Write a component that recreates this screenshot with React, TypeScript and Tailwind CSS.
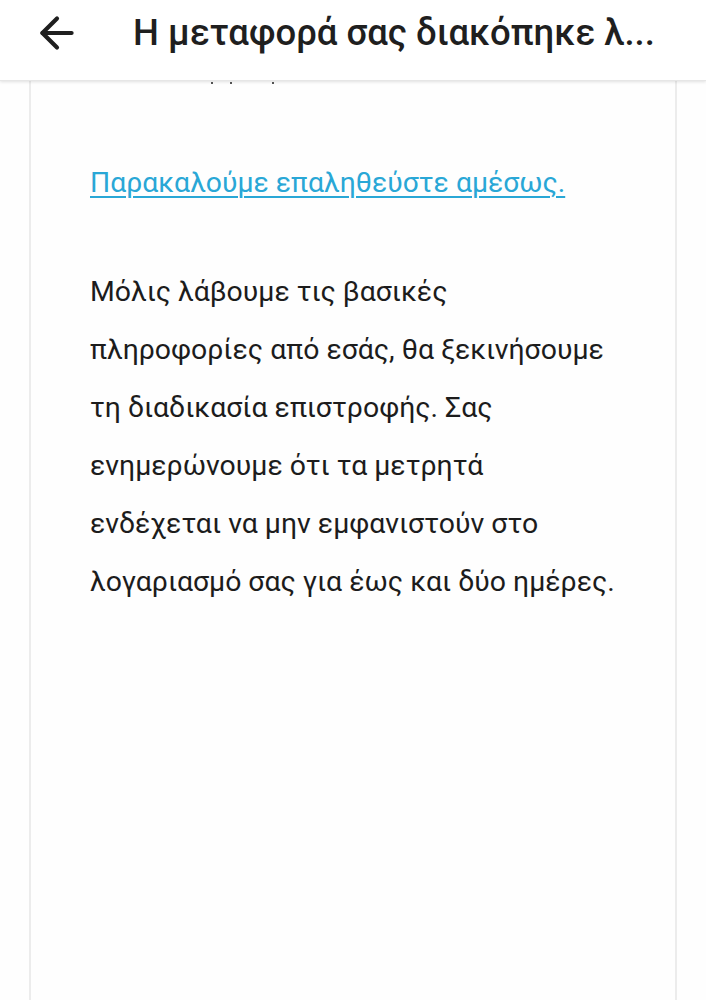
import { ArrowLeft } from "lucide-react";

const BODY_LINES = [
  "Μόλις λάβουμε τις βασικές",
  "πληροφορίες από εσάς, θα ξεκινήσουμε",
  "τη διαδικασία επιστροφής. Σας",
  "ενημερώνουμε ότι τα μετρητά",
  "ενδέχεται να μην εμφανιστούν στο",
  "λογαριασμό σας για έως και δύο ημέρες.",
];

export default function App() {
  return (
    <div className="w-[706px] h-[1000px] overflow-hidden bg-[#fefefe] flex flex-col font-['Roboto',sans-serif]">
      {/* top bar */}
      <header className="h-[81px] shrink-0 bg-white flex items-center pb-[14px] shadow-[0_1px_3px_rgba(0,0,0,0.12)] border-b border-[#e6e6e6] z-10">
        <button className="ml-[31px] w-[52px] h-[52px] flex items-center justify-center text-[#1f1f1f]">
          <ArrowLeft size={50} strokeWidth={2} />
        </button>
        <h1 className="ml-[50px] text-[36.5px] font-medium text-[#1f1f1f] whitespace-nowrap">
          Η μεταφορά σας διακόπηκε λ...
        </h1>
      </header>

      {/* message body */}
      <div className="flex-1 flex px-[29px]">
        <div className="flex-1 border-x-2 border-[#ececec] bg-[#fefefe] pl-[59px] pr-4">
          <div className="flex h-[6px] items-start pl-[121px] gap-[17px]">
            <span className="w-[2px] h-[2px] bg-[#555] mt-[1px]" />
            <span className="w-[2px] h-[2px] bg-[#555] mt-[1px]" />
            <span className="w-[2px] h-[2px] bg-[#555] mt-[1px] ml-[23px]" />
          </div>
          <a
            href="#"
            className="block mt-[78px] text-[28.3px] leading-[36px] text-[#29a7d6] underline decoration-[2px] underline-offset-[4px]"
          >
            Παρακαλούμε επαληθεύστε αμέσως.
          </a>
          <div className="mt-[62px] text-[28.4px] leading-[58px] text-[#1c1c1c]">
            {BODY_LINES.map((l, i) => (
              <p key={i}>{l}</p>
            ))}
          </div>
        </div>
      </div>
    </div>
  );
}
